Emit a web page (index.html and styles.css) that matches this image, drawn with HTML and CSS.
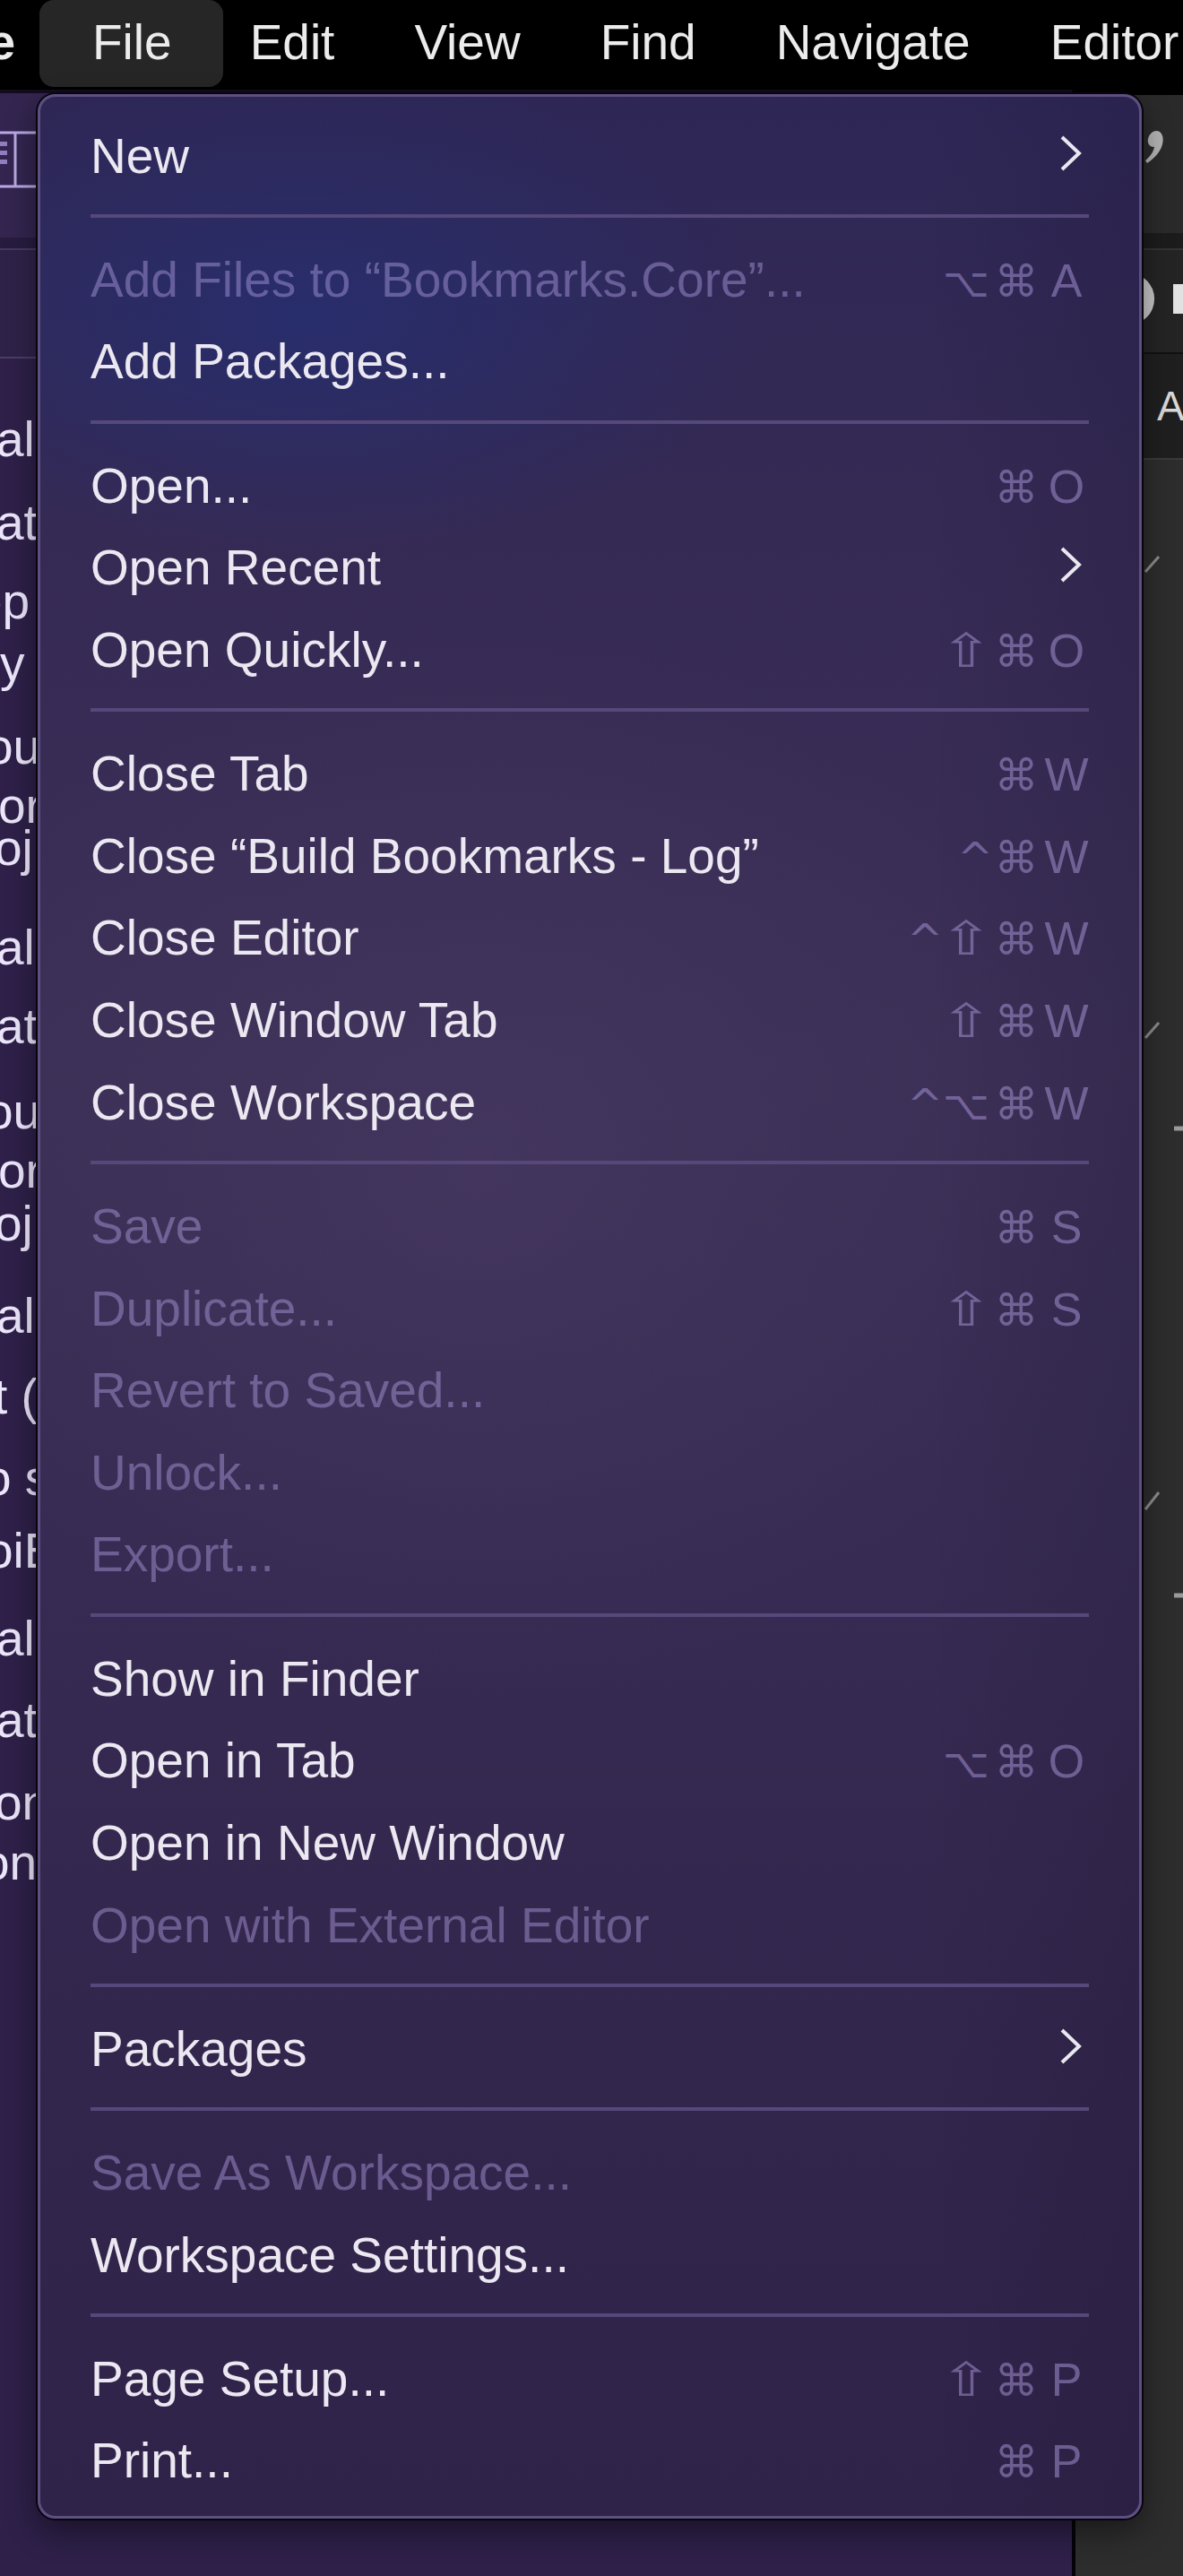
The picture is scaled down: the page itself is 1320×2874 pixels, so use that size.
FILE: index.html
```html
<!DOCTYPE html>
<html lang="en">
<head>
<meta charset="utf-8">
<title>Xcode File menu</title>
<link rel="stylesheet" href="styles.css">
</head>
<body>
<div class="menubar">
  <span class="mb-app">Xcode</span>
  <span class="mb-item active">File</span>
  <span class="mb-item">Edit</span>
  <span class="mb-item">View</span>
  <span class="mb-item">Find</span>
  <span class="mb-item">Navigate</span>
  <span class="mb-item">Editor</span>
</div>

<div class="desktop">
  <div class="purple">
    <div class="p-toolbar">
      <svg class="nav-icon" width="42" height="64" viewBox="0 0 42 64">
        <path d="M-4 2 H40 M-4 62 H40 M17 2 V62" stroke="#b9a9e4" stroke-width="3" fill="none"/>
        <rect x="0" y="12" width="8" height="5" fill="#8f7fbf"/>
        <rect x="0" y="22" width="8" height="5" fill="#8f7fbf"/>
        <rect x="0" y="32" width="8" height="5" fill="#8f7fbf"/>
      </svg>
    </div>
    <div class="p-band"></div>
    <div class="p-filter"></div>
    <div class="frags">
      <div><span class="f4">al</span></div>
      <div><span class="f4">at</span></div>
      <div><span class="f28">ep</span></div>
      <div><span>y</span></div>
      <div><span class="f16">ou</span></div>
      <div><span class="f2">or</span></div>
      <div><span class="f6">oj</span></div>
      <div><span class="f4">al</span></div>
      <div><span class="f4">at</span></div>
      <div><span class="f16">ou</span></div>
      <div><span class="f2">or</span></div>
      <div><span class="f6">oj</span></div>
      <div><span class="f4">al</span></div>
      <div><span class="f7">t (</span></div>
      <div><span class="f18">o s</span></div>
      <div><span class="f16">oiE</span></div>
      <div><span class="f4">al</span></div>
      <div><span class="f4">at</span></div>
      <div><span class="f6">on</span></div>
      <div><span class="f20">on</span></div>
    </div>
  </div>
  <div class="vline"></div>
  <div class="grey">
    <div class="g-top">
      <svg class="g-glyph" width="120" height="150" viewBox="0 0 120 150">
        <path d="M90 40 C97 40 99 48 97 55 C95 63 89 70 80 76 L78 73 C84 68 87 63 88 58 C82 58 80 53 81 49 C82 44 86 40 90 40 Z" fill="#b3b3b3"/>
      </svg>
    </div>
    <div class="g-band"></div>
    <div class="g-tabs">
      <span class="pill"></span>
      <span class="tabtext"></span>
    </div>
    <div class="g-hdr">A</div>
    <div class="g-body">
      <svg width="120" height="2300" viewBox="0 0 120 2300">
        <g stroke="#8c8c8c" stroke-width="3" fill="none">
          <path d="M78 125 L93 108"/>
          <path d="M78 645 L93 628"/>
          <path d="M78 1171 L93 1152"/>
        </g>
        <g stroke="#9a9a9a" stroke-width="5">
          <path d="M110 746 H120"/>
          <path d="M110 1267 H120"/>
        </g>
      </svg>
    </div>
  </div>
</div>

<div class="menu">
  <div class="item"><span class="label">New</span><span class="chev"><svg width="25" height="40" viewBox="0 0 25 40"><polyline points="3,2 22,20 3,38" fill="none" stroke="#e9e7ef" stroke-width="4"/></svg></span></div>
  <div class="sep"></div>
  <div class="item dis"><span class="label">Add Files to “Bookmarks.Core”...</span><span class="sc"><span class="m m-opt">⌥</span><span class="m m-cmd">⌘</span><span class="key">A</span></span></div>
  <div class="item"><span class="label">Add Packages...</span></div>
  <div class="sep"></div>
  <div class="item"><span class="label">Open...</span><span class="sc"><span class="m m-cmd">⌘</span><span class="key">O</span></span></div>
  <div class="item"><span class="label">Open Recent</span><span class="chev"><svg width="25" height="40" viewBox="0 0 25 40"><polyline points="3,2 22,20 3,38" fill="none" stroke="#e9e7ef" stroke-width="4"/></svg></span></div>
  <div class="item"><span class="label">Open Quickly...</span><span class="sc"><span class="m m-sh">⇧</span><span class="m m-cmd">⌘</span><span class="key">O</span></span></div>
  <div class="sep"></div>
  <div class="item"><span class="label">Close Tab</span><span class="sc"><span class="m m-cmd">⌘</span><span class="key">W</span></span></div>
  <div class="item"><span class="label">Close “Build Bookmarks - Log”</span><span class="sc"><span class="m m-ctl">^</span><span class="m m-cmd">⌘</span><span class="key">W</span></span></div>
  <div class="item"><span class="label">Close Editor</span><span class="sc"><span class="m m-ctl">^</span><span class="m m-sh">⇧</span><span class="m m-cmd">⌘</span><span class="key">W</span></span></div>
  <div class="item"><span class="label">Close Window Tab</span><span class="sc"><span class="m m-sh">⇧</span><span class="m m-cmd">⌘</span><span class="key">W</span></span></div>
  <div class="item"><span class="label">Close Workspace</span><span class="sc"><span class="m m-ctl">^</span><span class="m m-opt">⌥</span><span class="m m-cmd">⌘</span><span class="key">W</span></span></div>
  <div class="sep"></div>
  <div class="item dis"><span class="label">Save</span><span class="sc"><span class="m m-cmd">⌘</span><span class="key">S</span></span></div>
  <div class="item dis"><span class="label">Duplicate...</span><span class="sc"><span class="m m-sh">⇧</span><span class="m m-cmd">⌘</span><span class="key">S</span></span></div>
  <div class="item dis"><span class="label">Revert to Saved...</span></div>
  <div class="item dis"><span class="label">Unlock...</span></div>
  <div class="item dis"><span class="label">Export...</span></div>
  <div class="sep"></div>
  <div class="item"><span class="label">Show in Finder</span></div>
  <div class="item"><span class="label">Open in Tab</span><span class="sc"><span class="m m-opt">⌥</span><span class="m m-cmd">⌘</span><span class="key">O</span></span></div>
  <div class="item"><span class="label">Open in New Window</span></div>
  <div class="item dis"><span class="label">Open with External Editor</span></div>
  <div class="sep"></div>
  <div class="item"><span class="label">Packages</span><span class="chev"><svg width="25" height="40" viewBox="0 0 25 40"><polyline points="3,2 22,20 3,38" fill="none" stroke="#e9e7ef" stroke-width="4"/></svg></span></div>
  <div class="sep"></div>
  <div class="item dis"><span class="label">Save As Workspace...</span></div>
  <div class="item"><span class="label">Workspace Settings...</span></div>
  <div class="sep"></div>
  <div class="item"><span class="label">Page Setup...</span><span class="sc"><span class="m m-sh">⇧</span><span class="m m-cmd">⌘</span><span class="key">P</span></span></div>
  <div class="item"><span class="label">Print...</span><span class="sc"><span class="m m-cmd">⌘</span><span class="key">P</span></span></div>
</div>
</body>
</html>
```

FILE: styles.css
```css
* { box-sizing: border-box; margin: 0; padding: 0; }

html, body {
  width: 1320px;
  height: 2874px;
  overflow: hidden;
  background: #2d1f4a;
}

body {
  position: relative;
  font-family: "Liberation Sans", Arial, sans-serif;
}

/* ---------- menu bar ---------- */
.menubar {
  height: 100px;
  background: #000;
  display: flex;
  align-items: flex-start;
  color: #ececec;
  font-size: 55px;
  line-height: 95px;
  white-space: nowrap;
  overflow: hidden;
}

.mb-app {
  flex: none;
  width: 217px;
  margin-left: -200px;
  text-align: right;
  font-weight: bold;
}

.mb-item {
  flex: none;
  height: 97px;
  padding: 0 44.5px;
}

.mb-item.active {
  background: #262626;
  border-radius: 16px;
  padding: 0 57px 0 59px;
  margin: 0 -14.5px 0 27px;
}

/* ---------- background windows ---------- */
.desktop {
  display: grid;
  grid-template-columns: 1196px 4px 120px;
  height: 2774px;
}

.purple {
  background: #2e2049;
  display: flex;
  flex-direction: column;
}

.p-toolbar {
  height: 165px;
  flex: none;
  background: #33254f;
  border-top: 4px solid #120c1e;
}

.nav-icon {
  display: block;
  margin-top: 42px;
}

.p-band {
  height: 14px;
  flex: none;
  background: #271c40;
  border-bottom: 2px solid #46395f;
}

.p-filter {
  height: 121px;
  flex: none;
  background: #2f2249;
  border-bottom: 2px solid #4a3e66;
}

.frags {
  padding-top: 90px;
  color: #ece6fa;
  font-size: 55px;
  white-space: nowrap;
  overflow: hidden;
}

.frags div { line-height: 0; height: 90px; }
.frags span { display: inline-block; }
.frags div:nth-child(1)  { height: 93px; }
.frags div:nth-child(2)  { height: 88px; }
.frags div:nth-child(3)  { height: 69px; }
.frags div:nth-child(4)  { height: 93px; }
.frags div:nth-child(5)  { height: 66px; }
.frags div:nth-child(6)  { height: 47px; }
.frags div:nth-child(7)  { height: 111px; }
.frags div:nth-child(8)  { height: 88px; }
.frags div:nth-child(9)  { height: 95px; }
.frags div:nth-child(10) { height: 66px; }
.frags div:nth-child(11) { height: 59px; }
.frags div:nth-child(12) { height: 103px; }
.frags div:nth-child(13) { height: 90px; }
.frags div:nth-child(14) { height: 91px; }
.frags div:nth-child(15) { height: 81px; }
.frags div:nth-child(16) { height: 98px; }
.frags div:nth-child(17) { height: 91px; }
.frags div:nth-child(18) { height: 92px; }
.frags div:nth-child(19) { height: 67px; }

.f2  { margin-left: -2px; }
.f4  { margin-left: -4px; }
.f6  { margin-left: -6px; }
.f7  { margin-left: -7px; }
.f16 { margin-left: -16px; }
.f18 { margin-left: -18px; }
.f20 { margin-left: -20px; }
.f28 { margin-left: -28px; }

.vline { background: #050308; }

.grey {
  background: #2d2d2d;
  display: flex;
  flex-direction: column;
}

.g-top {
  height: 160px;
  flex: none;
  background: #2a2a2a;
  border-top: 6px solid #000;
}

.g-glyph { display: block; }

.g-band {
  height: 17px;
  flex: none;
  background: #1c1c1c;
}

.g-tabs {
  height: 118px;
  flex: none;
  background: #242424;
  border-top: 2px solid #333;
  border-bottom: 2px solid #111;
  display: flex;
  align-items: flex-start;
}

.pill {
  display: block;
  width: 61px;
  height: 57px;
  margin: 26px 0 0 30px;
  border-radius: 28px;
  background: #c6c6c6;
}

.tabtext {
  display: block;
  width: 12px;
  height: 33px;
  margin: 38px 0 0 21px;
  background: #e2e2e2;
}

.g-hdr {
  height: 118px;
  flex: none;
  background: #1f1f1f;
  border-bottom: 2px solid #3a3a3a;
  color: #d8d8d8;
  font-size: 46px;
  line-height: 116px;
  padding-left: 91px;
}

.g-body {
  flex: 1;
  background: #2d2d2d;
  overflow: hidden;
}

.g-body svg { display: block; }

/* ---------- dropdown menu ---------- */
.menu {
  position: absolute;
  left: 42px;
  top: 105px;
  width: 1232px;
  padding: 20.7px 56px 15px;
  border: 3px solid #5d4f80;
  border-radius: 20px;
  box-shadow: 0 0 0 2px #07040d, 0 14px 34px rgba(0, 0, 0, 0.45);
  background:
    radial-gradient(ellipse 42% 10% at 24% 9%, rgba(38, 46, 112, 0.85), rgba(38, 46, 112, 0)),
    radial-gradient(ellipse 55% 22% at 40% 44%, rgba(70, 56, 96, 0.75), rgba(70, 56, 96, 0)),
    linear-gradient(90deg, rgba(0, 0, 0, 0) 80%, rgba(10, 6, 24, 0.12) 100%),
    linear-gradient(180deg, #2e2756 0%, #352a54 18%, #3b2f56 40%, #372b53 60%, #33264d 80%, #30234a 100%);
  color: #ebe8f1;
  font-size: 55px;
}

.item {
  height: 91.667px;
  display: flex;
  justify-content: space-between;
  line-height: 91.667px;
  white-space: nowrap;
}

.item.dis .label { color: rgba(186, 166, 236, 0.42); }

.sep {
  height: 4px;
  margin: 18.4px 0 24.1px;
  background: #56487a;
}

.chev {
  display: block;
  margin-right: 8px;
}

.chev svg {
  vertical-align: 2px;
}

.sc {
  display: block;
  color: rgba(186, 166, 236, 0.45);
}

.m {
  display: inline-block;
  text-align: center;
  font-family: "DejaVu Sans", sans-serif;
  line-height: 1;
}

.m-ctl {
  width: 40px;
  font-size: 48px;
}

.m-sh {
  width: 52px;
  margin-right: 4px;
  font-size: 52px;
  transform: scaleX(1.35);
}

.m-opt {
  width: 52px;
  margin-right: 4px;
  font-size: 45px;
}

.m-cmd {
  width: 52px;
  margin-right: 5px;
  font-size: 49px;
}

.key {
  display: inline-block;
  width: 50px;
  text-align: center;
  font-size: 52px;
}
```
